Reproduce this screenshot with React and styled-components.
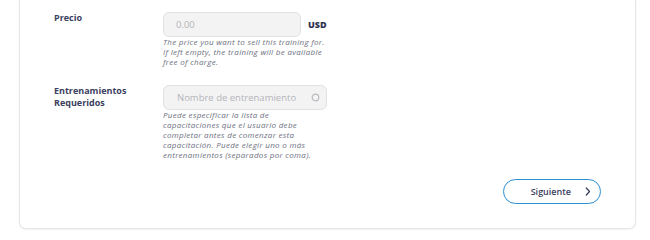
import React from "react";
import styled, { createGlobalStyle } from "styled-components";

const Global = createGlobalStyle`
  html, body { margin: 0; padding: 0; background: #ffffff; }
  body { font-family: "Open Sans", "Liberation Sans", sans-serif; }
`;

const Page = styled.div`
  width: 650px;
  height: 236px;
  overflow: hidden;
  box-sizing: border-box;
  padding: 0 15px 7px 19px;
  display: flex;
  flex-direction: column;
  justify-content: flex-end;
`;

const Card = styled.div`
  box-sizing: border-box;
  width: 617px;
  border: 1px solid #e6e6e8;
  border-top: none;
  border-radius: 0 0 7px 7px;
  box-shadow: 0 1px 2px rgba(0, 0, 0, 0.06);
  background: #fff;
  padding: 12px 34px 24px 34px;
  display: flex;
  flex-direction: column;
`;

const Row = styled.div`
  display: grid;
  grid-template-columns: 109px 1fr;
  margin-bottom: ${(p) => p.$gap || 0}px;
`;

const Label = styled.div`
  font-size: 9px;
  font-weight: 700;
  color: #3b4060;
  line-height: 11.5px;
  padding-top: ${(p) => p.$pt || 0}px;
`;

const Field = styled.div`
  display: flex;
  flex-direction: column;
`;

const InputLine = styled.div`
  display: flex;
  align-items: center;
  gap: 7px;
`;

const Input = styled.div`
  box-sizing: border-box;
  width: ${(p) => p.$w}px;
  height: 25px;
  border: 1px solid #e2e2e4;
  border-radius: 6px;
  background: #f3f3f4;
  display: flex;
  align-items: center;
  justify-content: space-between;
  padding: 0 6px 0 ${(p) => p.$pl}px;
  font-size: 9.5px;
  color: #b4b5ba;
`;

const Unit = styled.span`
  font-size: 9px;
  font-weight: 800;
  color: #2f3350;
`;

const Help = styled.div`
  margin-top: 0;
  font-size: 8px;
  letter-spacing: 0.3px;
  font-style: italic;
  line-height: 10px;
  color: #6d7080;
  white-space: nowrap;
`;

const Footer = styled.div`
  display: flex;
  justify-content: flex-end;
`;

const Button = styled.button`
  box-sizing: border-box;
  width: 98px;
  height: 25px;
  border: 1.5px solid #2b8ecf;
  border-radius: 13px;
  background: #fff;
  display: flex;
  align-items: center;
  justify-content: flex-end;
  gap: 14px;
  padding: 0 9px 0 0;
  font-family: "Open Sans", "Liberation Sans", sans-serif;
  font-size: 9px;
  font-weight: 600;
  color: #3b4060;
`;

const Circle = () => (
  <svg width="9" height="9" viewBox="0 0 9 9">
    <circle cx="4.5" cy="4.5" r="3.3" fill="none" stroke="#b9babe" strokeWidth="1.2" />
  </svg>
);

const Chevron = () => (
  <svg width="6" height="9" viewBox="0 0 6 9">
    <path d="M1.3 1 L4.5 4.5 L1.3 8" fill="none" stroke="#3b4060" strokeWidth="1.3" strokeLinecap="round" strokeLinejoin="round" />
  </svg>
);

export default function App() {
  return (
    <>
      <Global />
      <Page>
        <Card>
          <Row $gap={18}>
            <Label $pt={0}>Precio</Label>
            <Field>
              <InputLine>
                <Input $w={138} $pl={12}>0.00</Input>
                <Unit>USD</Unit>
              </InputLine>
              <Help>
                The price you want to sell this training for.
                <br />
                If left empty, the training will be available
                <br />
                free of charge.
              </Help>
            </Field>
          </Row>
          <Row $gap={19}>
            <Label $pt={0}>
              Entrenamientos
              <br />
              Requeridos
            </Label>
            <Field>
              <Input $w={164} $pl={13}>
                Nombre de entrenamiento
                <Circle />
              </Input>
              <Help>
                Puede especificar la lista de
                <br />
                capacitaciones que el usuario debe
                <br />
                completar antes de comenzar esta
                <br />
                capacitación. Puede elegir uno o más
                <br />
                entrenamientos (separados por coma).
              </Help>
            </Field>
          </Row>
          <Footer>
            <Button>
              Siguiente
              <Chevron />
            </Button>
          </Footer>
        </Card>
      </Page>
    </>
  );
}
